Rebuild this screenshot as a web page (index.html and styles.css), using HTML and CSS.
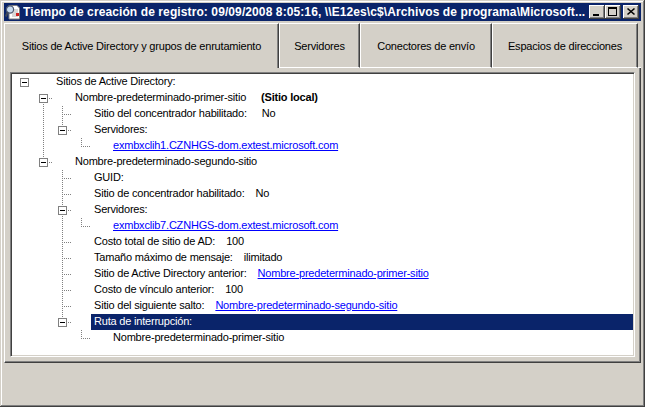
FILE: index.html
```html
<!DOCTYPE html>
<html lang="es">
<head>
<meta charset="utf-8">
<title>Tiempo de creación de registro</title>
<link rel="stylesheet" href="styles.css">
</head>
<body>
<div class="window">
  <div class="titlebar">
    <svg class="appicon" width="16" height="16" viewBox="0 0 16 16">
      <path d="M4 1.5h8l2.5 2.5v11h-10.5z" fill="#fff" stroke="#808080"/>
      <path d="M7 6h6M7 8h6M7 10h6M7 12h6" stroke="#b0b0b0"/>
      <rect x="11" y="9" width="3" height="3" fill="#d02020"/>
      <circle cx="5" cy="5.5" r="3.6" fill="#c8dcf0" stroke="#505a70" stroke-width="1.2"/>
      <path d="M2.6 8.2 L0.8 12.5" stroke="#404858" stroke-width="2"/>
    </svg>
    <span class="title">Tiempo de creación de registro: 09/09/2008 8:05:16, \\E12es\c$\Archivos de programa\Microsoft...</span>
    <div class="caption-buttons">
      <span class="cbtn"><svg width="16" height="14" viewBox="0 0 16 14"><rect x="4" y="9" width="6" height="2" fill="#000"/></svg></span>
      <span class="cbtn"><svg width="16" height="14" viewBox="0 0 16 14"><rect x="3.5" y="2.5" width="8" height="8" fill="none" stroke="#000"/><rect x="3" y="2" width="9" height="2" fill="#000"/></svg></span>
      <span class="cbtn close"><svg width="16" height="14" viewBox="0 0 16 14"><path d="M4.5 3.5l7 6M11.5 3.5l-7 6" stroke="#000" stroke-width="1.6"/></svg></span>
    </div>
  </div>

  <div class="tabs">
    <div class="tab active w1">Sitios de Active Directory y grupos de enrutamiento</div>
    <div class="tab w2">Servidores</div>
    <div class="tab w3">Conectores de envío</div>
    <div class="tab w4">Espacios de direcciones</div>
    <div class="tab-fill"></div>
  </div>

  <div class="panel">
    <div class="tree">
      <div class="row"><span class="c"><span class="box"></span></span><span class="gap"></span><span class="lbl">Sitios de Active Directory:</span></div>
      <div class="row"><span class="c"></span><span class="c r"><span class="box"></span></span><span class="gap"></span><span class="lbl">Nombre-predeterminado-primer-sitio</span><span class="val wide bold">(Sitio local)</span></div>
      <div class="row"><span class="c"></span><span class="c v"></span><span class="c t"></span><span class="gap"></span><span class="lbl">Sitio del concentrador habilitado:</span><span class="val wide">No</span></div>
      <div class="row"><span class="c"></span><span class="c v"></span><span class="c l"><span class="box"></span></span><span class="gap"></span><span class="lbl">Servidores:</span></div>
      <div class="row"><span class="c"></span><span class="c v"></span><span class="c"></span><span class="c l"></span><span class="gap"></span><span class="lbl"><a class="link" href="#">exmbxclih1.CZNHGS-dom.extest.microsoft.com</a></span></div>
      <div class="row"><span class="c"></span><span class="c l"><span class="box"></span></span><span class="gap"></span><span class="lbl">Nombre-predeterminado-segundo-sitio</span></div>
      <div class="row"><span class="c"></span><span class="c"></span><span class="c t"></span><span class="gap"></span><span class="lbl">GUID:</span></div>
      <div class="row"><span class="c"></span><span class="c"></span><span class="c t"></span><span class="gap"></span><span class="lbl">Sitio de concentrador habilitado:</span><span class="val">No</span></div>
      <div class="row"><span class="c"></span><span class="c"></span><span class="c t"><span class="box"></span></span><span class="gap"></span><span class="lbl">Servidores:</span></div>
      <div class="row"><span class="c"></span><span class="c"></span><span class="c v"></span><span class="c l"></span><span class="gap"></span><span class="lbl"><a class="link" href="#">exmbxclib7.CZNHGS-dom.extest.microsoft.com</a></span></div>
      <div class="row"><span class="c"></span><span class="c"></span><span class="c t"></span><span class="gap"></span><span class="lbl">Costo total de sitio de AD:</span><span class="val">100</span></div>
      <div class="row"><span class="c"></span><span class="c"></span><span class="c t"></span><span class="gap"></span><span class="lbl">Tamaño máximo de mensaje:</span><span class="val">ilimitado</span></div>
      <div class="row"><span class="c"></span><span class="c"></span><span class="c t"></span><span class="gap"></span><span class="lbl">Sitio de Active Directory anterior:</span><span class="val"><a class="link" href="#">Nombre-predeterminado-primer-sitio</a></span></div>
      <div class="row"><span class="c"></span><span class="c"></span><span class="c t"></span><span class="gap"></span><span class="lbl">Costo de vínculo anterior:</span><span class="val">100</span></div>
      <div class="row"><span class="c"></span><span class="c"></span><span class="c t"></span><span class="gap"></span><span class="lbl">Sitio del siguiente salto:</span><span class="val"><a class="link" href="#">Nombre-predeterminado-segundo-sitio</a></span></div>
      <div class="row"><span class="c"></span><span class="c"></span><span class="c l"><span class="box"></span></span><span class="gap"></span><span class="lbl selected">Ruta de interrupción:</span></div>
      <div class="row"><span class="c"></span><span class="c"></span><span class="c"></span><span class="c l"></span><span class="gap"></span><span class="lbl">Nombre-predeterminado-primer-sitio</span></div>
    </div>
  </div>

  <div class="footer"></div>
</div>
</body>
</html>
```

FILE: styles.css
```css
html, body {
  margin: 0;
  padding: 0;
  background: #d4d0c8;
}

body {
  font-family: "Liberation Sans", Arial, sans-serif;
  font-size: 11px;
  color: #000;
}

.window {
  width: 645px;
  height: 407px;
  box-sizing: border-box;
  padding: 3px 4px 4px 4px;
  background: #d4d0c8;
  box-shadow:
    inset -1px -1px #404040,
    inset 1px 1px #d4d0c8,
    inset -2px -2px #808080,
    inset 2px 2px #ffffff;
  display: flex;
  flex-direction: column;
}

/* ---------- title bar ---------- */
.titlebar {
  height: 18px;
  background: #0a246a;
  display: flex;
  align-items: center;
  padding-left: 1px;
  padding-right: 2px;
}

.appicon {
  flex: none;
  margin-right: 2px;
}

.title {
  flex: 1;
  color: #fff;
  font-weight: bold;
  font-size: 12px;
  letter-spacing: 0.1px;
  white-space: nowrap;
  overflow: hidden;
}

.caption-buttons {
  display: flex;
  flex: none;
  margin-left: 3px;
}

.cbtn {
  width: 16px;
  height: 14px;
  background: #d4d0c8;
  box-shadow:
    inset -1px -1px #404040,
    inset 1px 1px #ffffff,
    inset -2px -2px #808080;
  display: block;
}

.cbtn svg {
  display: block;
}

.cbtn.close {
  margin-left: 2px;
}

/* ---------- tabs ---------- */
.tabs {
  display: flex;
  margin-top: 2px;
  height: 45px;
}

.tab {
  box-sizing: border-box;
  height: 45px;
  display: flex;
  align-items: center;
  justify-content: center;
  border-top: 1px solid #ffffff;
  border-left: 1px solid #ffffff;
  border-right: 1px solid #404040;
  border-bottom: 1px solid #ffffff;
  box-shadow: inset -1px 0 #808080;
  white-space: nowrap;
  letter-spacing: -0.2px;
  flex: none;
}

.tab.active {
  border-bottom: none;
}

.w1 { width: 275px; }
.w2 { width: 81px; }
.w3 { width: 132px; }
.w4 { width: 146px; }

.tab-fill {
  flex: 1;
  align-self: flex-end;
  border-bottom: 1px solid #ffffff;
}

/* ---------- panel ---------- */
.panel {
  box-sizing: border-box;
  height: 295px;
  border-left: 1px solid #ffffff;
  border-right: 1px solid #404040;
  border-bottom: 1px solid #404040;
  box-shadow: inset -1px -1px #808080;
  padding: 4px 5px 5px 5px;
}

.tree {
  box-sizing: border-box;
  height: 285px;
  background: #ffffff;
  border: 1px solid;
  border-color: #808080 #ffffff #ffffff #808080;
  box-shadow: inset 1px 1px #404040, inset -1px -1px #d4d0c8;
  padding: 1px 1px 1px 4px;
}

.row {
  display: flex;
  height: 16px;
  line-height: 14px;
  white-space: nowrap;
  letter-spacing: -0.2px;
}

.c {
  flex: none;
  width: 19px;
  height: 16px;
  display: block;
}

.c.v {
  background: repeating-linear-gradient(to bottom, #808080 0 1px, transparent 1px 2px) 9px 0 / 1px 16px no-repeat;
}

.c.t {
  background:
    repeating-linear-gradient(to bottom, #808080 0 1px, transparent 1px 2px) 9px 0 / 1px 16px no-repeat,
    repeating-linear-gradient(to right, #808080 0 1px, transparent 1px 2px) 11px 8px / 9px 1px no-repeat;
}

.c.l {
  background:
    repeating-linear-gradient(to bottom, #808080 0 1px, transparent 1px 2px) 9px 0 / 1px 9px no-repeat,
    repeating-linear-gradient(to right, #808080 0 1px, transparent 1px 2px) 11px 8px / 9px 1px no-repeat;
}

.c.r {
  background:
    repeating-linear-gradient(to bottom, #808080 0 1px, transparent 1px 2px) 9px 8px / 1px 8px no-repeat,
    repeating-linear-gradient(to right, #808080 0 1px, transparent 1px 2px) 11px 8px / 9px 1px no-repeat;
}

.box {
  display: block;
  box-sizing: border-box;
  width: 9px;
  height: 9px;
  margin: 4px 0 0 5px;
  border: 1px solid #808080;
  background: #ffffff linear-gradient(#000, #000) 1px 3px / 5px 1px no-repeat;
}

.gap {
  flex: none;
  width: 19px;
}

.lbl {
  padding: 0 3px;
  height: 16px;
}

.lbl.selected {
  flex: 1;
  background: #0a246a;
  color: #ffffff;
}

.val {
  margin-left: 8px;
}

.val.wide {
  margin-left: 12px;
}

.bold {
  font-weight: bold;
}

.link {
  color: #0000ff;
  text-decoration: underline;
}

/* ---------- footer ---------- */
.footer {
  flex: 1;
}
```
